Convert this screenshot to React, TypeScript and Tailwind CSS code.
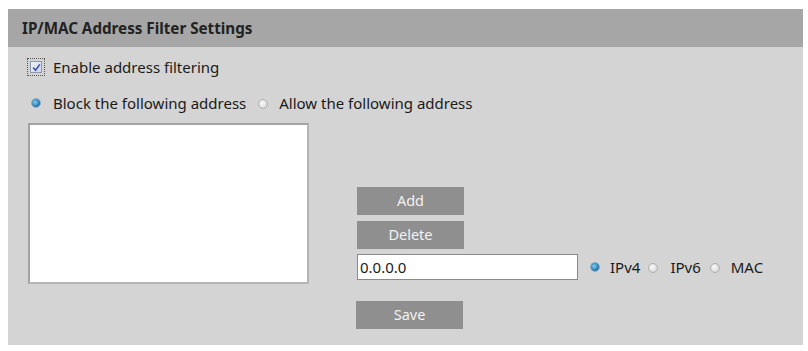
const font = { fontFamily: '"Noto Sans", "Open Sans", sans-serif' };

const Radio = ({ checked }: { checked?: boolean }) => (
  <span
    className={
      "inline-block w-[10px] h-[10px] rounded-full border " +
      (checked
        ? "border-[#8fa9c4] bg-[radial-gradient(circle_at_40%_40%,#7fd0f0,#1e6fa8_70%)]"
        : "border-[#b0b0b0] bg-[radial-gradient(circle_at_40%_40%,#fafafa,#d8d8d8_75%)]")
    }
  />
);

const GrayButton = ({ label }: { label: string }) => (
  <button className="w-[107px] h-[28px] bg-[#8f8f8f] text-[#f2f2f2] text-[14.5px]">
    {label}
  </button>
);

export default function App() {
  return (
    <div className="w-[808px] h-[351px] bg-white pt-[9px] pl-[8px]" style={font}>
      <div className="w-[795px] h-[336px] bg-[#d4d4d4] text-[#1a1a1a]">
        <div className="h-[38px] bg-[#a6a6a6] flex items-center pl-[14px] text-[15.2px] font-bold text-[#222]">
          IP/MAC Address Filter Settings
        </div>

        <div className="flex items-center pl-[19px] mt-[11px] h-[18px]">
          <span className="w-[18px] h-[18px] border border-dotted border-[#555] flex items-center justify-center">
            <span className="w-[12px] h-[12px] border border-[#8d9aa8] bg-[linear-gradient(135deg,#eef2f8,#cfd8e6)] flex items-center justify-center">
              <svg width="9" height="9" viewBox="0 0 9 9">
                <path d="M1.2 4.6 L3.6 7.2 L7.8 1.4" stroke="#3a4fb0" strokeWidth="1.6" fill="none" />
              </svg>
            </span>
          </span>
          <span className="ml-[8px] text-[15px]">Enable address filtering</span>
        </div>

        <div className="flex items-center pl-[23px] mt-[17px] h-[20px] text-[15px]">
          <Radio checked />
          <span className="ml-[12px]">Block the following address</span>
          <span className="ml-[12px]">
            <Radio />
          </span>
          <span className="ml-[11px]">Allow the following address</span>
        </div>

        <div className="flex mt-[10px] pl-[20px]">
          <div className="w-[281px] h-[161px] bg-white border-2 border-[#a3a3a3] border-b-[#b5b5b5] border-r-[#b5b5b5]" />
          <div className="ml-[47px] pt-[64px] flex flex-col">
            <div className="flex flex-col gap-[6px] pl-[1px]">
              <GrayButton label="Add" />
              <GrayButton label="Delete" />
            </div>
            <div className="flex items-center mt-[5px]">
              <div className="w-[221px] h-[26px] bg-white border border-[#8a8a8a] flex items-center pl-[2px] text-[15px] ml-[1px]">
                0.0.0.0
              </div>
              <div className="flex items-center ml-[12px] text-[15px]">
                <Radio checked />
                <span className="ml-[10px]">IPv4</span>
                <span className="ml-[8px]">
                  <Radio />
                </span>
                <span className="ml-[12px]">IPv6</span>
                <span className="ml-[9px]">
                  <Radio />
                </span>
                <span className="ml-[11px]">MAC</span>
              </div>
            </div>
            <div className="mt-[21px]">
              <GrayButton label="Save" />
            </div>
          </div>
        </div>
      </div>
    </div>
  );
}
